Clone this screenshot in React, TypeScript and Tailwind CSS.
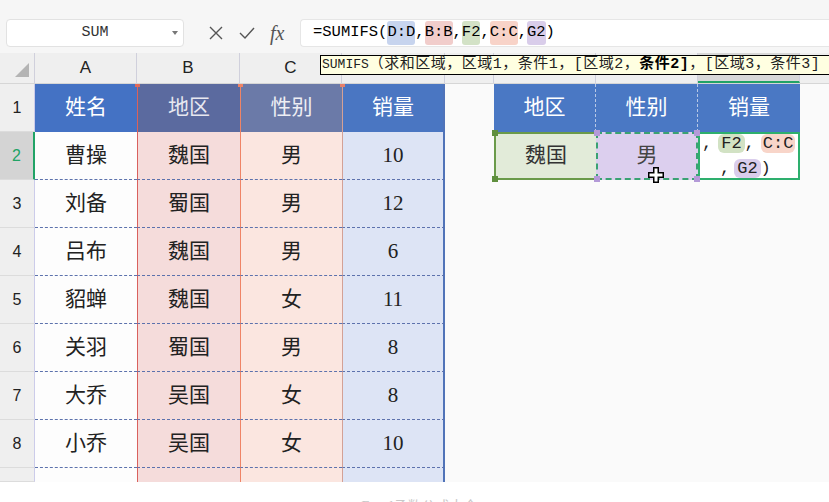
import React from "react";

const serif = { fontFamily: '"Liberation Serif", "Noto Sans CJK SC", serif' };
const mono = { fontFamily: '"Liberation Mono", "Noto Sans CJK SC", monospace' };

const rows = [
  ["姓名", "地区", "性别", "销量"],
  ["曹操", "魏国", "男", "10"],
  ["刘备", "蜀国", "男", "12"],
  ["吕布", "魏国", "男", "6"],
  ["貂蝉", "魏国", "女", "11"],
  ["关羽", "蜀国", "男", "8"],
  ["大乔", "吴国", "女", "8"],
  ["小乔", "吴国", "女", "10"],
  ["", "", "", ""],
];

const Mark = ({ c, children }: { c: string; children: React.ReactNode }) => (
  <span className={`rounded-[3px] ${c}`}>{children}</span>
);

const Cursor = () => (
  <svg width="18" height="18" viewBox="0 0 18 18" className="absolute left-[647px] top-[166px]">
    <path d="M6 1h6v5h5v6h-5v5H6v-5H1V6h5z" fill="#000" />
    <path d="M7.5 2.5h3v5h5v3h-5v5h-3v-5h-5v-3h5z" fill="#fff" />
  </svg>
);

export default function App() {
  return (
    <div className="relative w-[829px] h-[502px] overflow-hidden bg-[#f6f6f6] text-[#222]" style={serif}>
      {/* formula bar */}
      <div className="flex items-center h-[28px] mt-[19px] pl-[6px]">
        <div className="relative w-[178px] h-[28px] bg-white border border-[#e2e2e2] rounded-[4px] flex items-center justify-center text-[15px] text-[#333]" style={mono}>
          SUM
          <span className="absolute right-[5px] top-[11px] w-0 h-0 border-l-[3px] border-r-[3px] border-t-[4px] border-l-transparent border-r-transparent border-t-[#777]" />
        </div>
        <div className="flex items-center w-[116px] pl-[24px] gap-[14px] text-[#555]">
          <svg width="16" height="16" viewBox="0 0 16 16"><path d="M2 2l12 12M14 2L2 14" stroke="#555" strokeWidth="1.4" /></svg>
          <svg width="18" height="16" viewBox="0 0 18 16"><path d="M2 8l5 5L16 3" stroke="#555" strokeWidth="1.4" fill="none" /></svg>
          <span className="italic text-[20px] leading-none" style={serif}>fx</span>
        </div>
        <div className="flex-1 h-[28px] bg-white border-y border-l border-[#e6e6e6] rounded-l-[4px] flex items-center pl-[12px] text-[15.5px] text-black" style={mono}>
          =SUMIFS(<Mark c="bg-[#c7d4ee]">D:D</Mark>,<Mark c="bg-[#f1cdcb]">B:B</Mark>,<Mark c="bg-[#d3e2c6]">F2</Mark>,<Mark c="bg-[#f8d3c8]">C:C</Mark>,<Mark c="bg-[#d9cdea]">G2</Mark>)
        </div>
      </div>

      {/* column headers */}
      <div className="flex h-[31px] mt-[6px] border-b border-[#d6d6d6] bg-[#efefef] text-[17px] text-[#222]" style={{ fontFamily: '"Liberation Sans", sans-serif' }}>
        <div className="relative w-[35px] border-r border-[#d0d0dc]">
          <span className="absolute right-[5px] bottom-[6px] w-0 h-0" style={{ borderBottom: "14px solid #b4b4b4", borderLeft: "14px solid transparent" }} />
        </div>
        {["A", "B", "C", "D", "E", "F", "G", "H"].map((l, i) => (
          <div
            key={l}
            className={`flex items-center justify-center border-r border-[#d0d0dc] ${
              ["w-[102px]", "w-[103px]", "w-[102px]", "w-[103px]", "w-[49px]", "w-[102px]", "w-[102px]", "w-[102px]"][i]
            } ${l === "H" ? "bg-[#d8d8d8] border-b-2 border-b-[#21a366]" : ""}`}
          >
            {l}
          </div>
        ))}
        <div className="flex-1" />
      </div>

      {/* grid */}
      <div className="flex flex-col">
        {rows.map((r, i) => {
          const head = i === 0;
          const last = i === rows.length - 1;
          const h = last ? "h-[14px]" : "h-[48px]";
          const line = head || last ? "" : "border-b [border-bottom-style:dashed] border-b-[#5d72ad]";
          return (
            <div key={i} className={`flex ${h} text-[21px]`}>
              <div
                className={`w-[35px] flex items-center justify-center text-[16px] border-b border-[#dcdcdc] ${
                  i === 1 ? "bg-[#d4d4d4] text-[#21a366] border-r-2 border-r-[#21a366]" : "bg-[#efefef] border-r border-r-[#ccccea]"
                }`}
                style={{ fontFamily: '"Liberation Sans", sans-serif' }}
              >
                {last ? "" : i + 1}
              </div>
              <div className={`w-[102px] flex items-center justify-center ${head ? "bg-[#4472c4] text-white" : "bg-[#fdfdfd]"} ${line}`}>{r[0]}</div>
              <div className={`relative w-[103px] flex items-center justify-center border-l border-l-[#d9615d] ${head ? "bg-[#5b6a9f] text-[#e8e8f0]" : "bg-[#f5dcdb]"} ${line}`}>
                {head && <span className="absolute -left-[3px] top-0 w-[5px] h-[3px] bg-[#e06a5a]" />}
                {r[1]}
              </div>
              <div className={`relative w-[102px] flex items-center justify-center border-l border-l-[#ef8466] ${head ? "bg-[#6b7aa8] text-[#eeeef4]" : "bg-[#fbe6e0]"} ${line}`}>
                {head && <span className="absolute -left-[3px] top-0 w-[5px] h-[3px] bg-[#ef8466]" />}
                {r[2]}
              </div>
              <div className={`relative w-[103px] flex items-center justify-center border-l border-l-[#d3a196] border-r-2 border-r-[#5073b8] ${head ? "bg-[#4a76c2] text-white" : "bg-[#dde4f5]"} ${line}`}>
                {head && <span className="absolute -left-[3px] top-0 w-[5px] h-[3px] bg-[#e8806a]" />}
                {r[3]}
              </div>
              <div className="w-[49px] bg-[#fafafa]" />
              {head ? (
                <>
                  <div className="w-[102px] flex items-center justify-center bg-[#4a78c4] text-white border-r [border-right-style:dashed] border-r-[#b8c8e6]">地区</div>
                  <div className="w-[102px] flex items-center justify-center bg-[#4a78c4] text-white border-r [border-right-style:dashed] border-r-[#b8c8e6]">性别</div>
                  <div className="w-[102px] flex items-center justify-center bg-[#4a78c4] text-white">销量</div>
                </>
              ) : i === 1 ? (
                <>
                  <div className="relative w-[102px] flex items-center justify-center bg-[#e2ebd9] border-y-2 border-l-2 border-[#6a9a4a] text-[#333]">
                    <span className="absolute -left-[4px] -top-[4px] w-[6px] h-[6px] bg-[#5f8f3e]" />
                    <span className="absolute -left-[4px] -bottom-[4px] w-[6px] h-[6px] bg-[#5f8f3e]" />
                    魏国
                  </div>
                  <div className="relative w-[102px] flex items-center justify-center bg-[#dccfee] border-2 border-dashed border-[#3aa273] text-[#444]">
                    <span className="absolute -left-[4px] -top-[4px] w-[6px] h-[6px] bg-[#b49ad8]" />
                    <span className="absolute -right-[4px] -top-[4px] w-[6px] h-[6px] bg-[#b49ad8]" />
                    <span className="absolute -left-[4px] -bottom-[4px] w-[6px] h-[6px] bg-[#b49ad8]" />
                    <span className="absolute -right-[4px] -bottom-[4px] w-[6px] h-[6px] bg-[#b49ad8]" />
                    男
                  </div>
                  <div className="w-[102px] flex flex-col justify-center bg-white border-2 border-[#2eaf6e] text-[17px] leading-[25px] text-[#222]" style={mono}>
                    <div className="pl-[2px] whitespace-nowrap">
                      ,<span className="ml-[6px] px-[3px] rounded-[6px] bg-[#d2e2c4]">F2</span>,<span className="ml-[6px] px-[2px] rounded-[6px] bg-[#f8d5c9]">C:C</span>
                    </div>
                    <div className="pl-[20px] whitespace-nowrap">
                      ,<span className="ml-[4px] px-[3px] rounded-[6px] bg-[#dacdec]">G2</span>)
                    </div>
                  </div>
                </>
              ) : (
                <div className="w-[306px] bg-[#fafafa]" />
              )}
              <div className="flex-1 bg-[#fafafa]" />
            </div>
          );
        })}
      </div>

      <div className="h-[20px] bg-white flex justify-center overflow-hidden">
        <span className="mt-[15px] pl-[10px] text-[14px] leading-[20px] text-[#c8c8c8]">Excel函数公式大全</span>
      </div>

      {/* function tooltip */}
      <div className="absolute left-[320px] top-[55px] h-[20px] pr-[60px] bg-[#ffffe1] border border-black flex items-center whitespace-nowrap text-[#222]" style={mono}>
        <span className="pl-[1px] text-[13px]">SUMIFS</span>
        <span className="text-[15px] tracking-[0.5px]">（求和区域，区域1，条件1，[区域2，<b className="text-black">条件2]</b>，[区域3，条件3]</span>
      </div>

      <Cursor />
    </div>
  );
}
